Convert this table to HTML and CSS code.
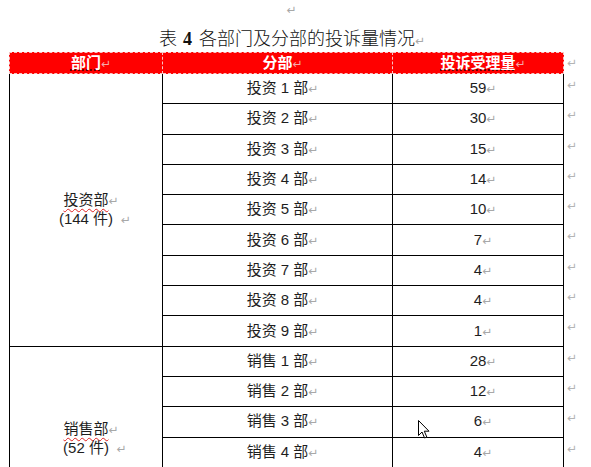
FILE: index.html
```html
<!DOCTYPE html>
<html lang="zh">
<head>
<meta charset="utf-8">
<title>表 4 各部门及分部的投诉量情况</title>
<link rel="stylesheet" href="styles.css">
</head>
<body>
<div class="page">
  <p class="blank"><span class="pm">↵</span></p>
  <p class="caption">表<b class="num">4</b>各部门及分部的投诉量情况<span class="pm">↵</span></p>
  <table class="grid">
    <thead>
      <tr class="head">
        <th class="c1"><span class="gram">部门</span><span class="pm-h">↵</span></th>
        <th class="c2">分部<span class="pm-h">↵</span></th>
        <th class="c3"><span class="gram">投诉受理量</span><span class="pm-h">↵</span></th>
        <th class="c4 end">↵</th>
      </tr>
    </thead>
    <tbody>
      <tr class="row">
        <td class="dept" rowspan="9"><span class="spell">投资部</span><span class="pm">↵</span><br>(144 件)<span class="pm">  ↵</span></td>
        <td>投资 1 部<span class="pm">↵</span></td><td>59<span class="pm">↵</span></td><td class="end">↵</td>
      </tr>
      <tr class="row"><td>投资 2 部<span class="pm">↵</span></td><td>30<span class="pm">↵</span></td><td class="end">↵</td></tr>
      <tr class="row"><td>投资 3 部<span class="pm">↵</span></td><td>15<span class="pm">↵</span></td><td class="end">↵</td></tr>
      <tr class="row"><td>投资 4 部<span class="pm">↵</span></td><td>14<span class="pm">↵</span></td><td class="end">↵</td></tr>
      <tr class="row"><td>投资 5 部<span class="pm">↵</span></td><td>10<span class="pm">↵</span></td><td class="end">↵</td></tr>
      <tr class="row"><td>投资 6 部<span class="pm">↵</span></td><td>7<span class="pm">↵</span></td><td class="end">↵</td></tr>
      <tr class="row"><td>投资 7 部<span class="pm">↵</span></td><td>4<span class="pm">↵</span></td><td class="end">↵</td></tr>
      <tr class="row"><td>投资 8 部<span class="pm">↵</span></td><td>4<span class="pm">↵</span></td><td class="end">↵</td></tr>
      <tr class="row"><td>投资 9 部<span class="pm">↵</span></td><td>1<span class="pm">↵</span></td><td class="end">↵</td></tr>
      <tr class="row">
        <td class="dept dept-open" rowspan="4"><span class="spell">销售部</span><span class="pm">↵</span><br>(52 件)<span class="pm">  ↵</span></td>
        <td>销售 1 部<span class="pm">↵</span></td><td>28<span class="pm">↵</span></td><td class="end">↵</td>
      </tr>
      <tr class="row"><td>销售 2 部<span class="pm">↵</span></td><td>12<span class="pm">↵</span></td><td class="end">↵</td></tr>
      <tr class="row"><td>销售 3 部<span class="pm">↵</span></td><td>6<span class="pm">↵</span></td><td class="end">↵</td></tr>
      <tr class="row"><td>销售 4 部<span class="pm">↵</span></td><td>4<span class="pm">↵</span></td><td class="end">↵</td></tr>
    </tbody>
  </table>
  <svg class="cursor" width="14" height="21" viewBox="0 0 14 21" aria-hidden="true">
    <path d="M1.5 1.5 L1.5 16.5 L5 13 L7.6 19 L9.8 18 L7.3 12.2 L12 12.2 Z" fill="#fff" stroke="#000" stroke-width="1" stroke-linejoin="miter"/>
  </svg>
</div>
</body>
</html>
```

FILE: styles.css
```css
html, body {
  margin: 0;
  padding: 0;
  overflow: hidden;
  background: #ffffff;
}

body {
  font-family: "Liberation Sans", "Noto Sans CJK SC", sans-serif;
  color: #1e1e1e;
}

.page {
  position: relative;
  padding: 2px 0 0 9px;
}

.blank {
  margin: 0;
  width: 555px;
  height: 20px;
  line-height: 16px;
  text-align: center;
  font-size: 12px;
}

.caption {
  margin: 0;
  width: 556px;
  height: 30px;
  line-height: 30px;
  text-align: center;
  font-size: 18px;
  font-weight: 300;
  font-family: "Noto Sans CJK SC", sans-serif;
  color: #111;
}

.caption .num {
  font-family: "Liberation Serif", serif;
  font-weight: bold;
  margin: 0 7px 0 6px;
}

.pm,
.pm-h {
  display: inline-block;
  width: 0;
  white-space: pre;
  text-align: left;
  font-size: 12px;
  font-family: "DejaVu Sans", sans-serif;
  font-weight: normal;
  text-decoration: none;
}

.pm {
  color: #a8a8a8;
}

.pm-h {
  color: #f4a9a9;
}

.grid {
  border-collapse: separate;
  border-spacing: 0;
  table-layout: fixed;
  width: 582px;
  font-size: 15px;
}

.c1 { width: 154px; }
.c2 { width: 230px; }
.c3 { width: 171px; }
.c4 { width: 27px; }

.grid th {
  box-sizing: border-box;
  height: 20px;
  padding: 0;
  background: #ff0000;
  color: #ffffff;
  font-weight: bold;
  font-family: "Noto Sans CJK SC", sans-serif;
  line-height: 18px;
  text-align: center;
  border-top: 1px dashed #f6c4c4;
  border-bottom: 1px dashed #f6c4c4;
  border-right: 1px dashed #f6c4c4;
}

.grid th.c1 {
  border-left: 1px dashed #f6c4c4;
}

.grid th.end {
  background: none;
  border: none;
  color: #b4b4b4;
  font-family: "DejaVu Sans", sans-serif;
  font-weight: normal;
  font-size: 12px;
  text-align: left;
  padding-left: 3px;
}

.gram {
  text-decoration: underline dotted #3a0000;
  text-underline-offset: 2px;
}

.spell {
  text-decoration: underline wavy #e02020;
  text-decoration-thickness: 1px;
  text-underline-offset: 3px;
}

.row {
  height: 30.3px;
}

.grid td {
  box-sizing: border-box;
  padding: 0;
  text-align: center;
  vertical-align: middle;
  line-height: 18px;
  border-right: 1px solid #000;
  border-bottom: 1px solid #000;
}

.grid td.dept {
  border-left: 1px solid #000;
}

/* the sales group continues below the visible area */
.grid td.dept-open {
  border-bottom: none;
  padding-top: 64px;
}

.grid td.end {
  border: none;
  vertical-align: top;
  text-align: left;
  padding: 4px 0 0 3px;
  color: #b4b4b4;
  font-family: "DejaVu Sans", sans-serif;
  font-size: 12px;
  line-height: 14px;
}

.cursor {
  position: absolute;
  left: 417px;
  top: 419px;
}
```
